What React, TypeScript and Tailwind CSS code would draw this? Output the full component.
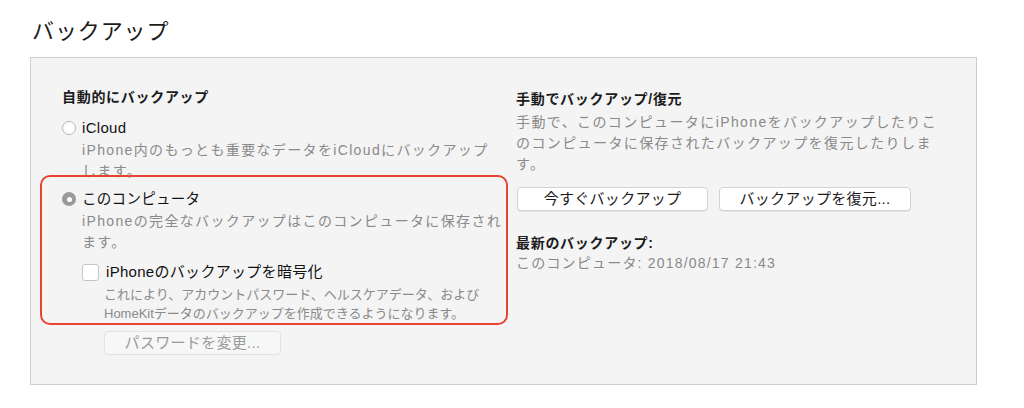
const FONT = 'font-["Liberation_Sans","Noto_Sans_CJK_JP",sans-serif]';

const Radio = ({ checked }: { checked?: boolean }) =>
  checked ? (
    <span className="flex h-[14px] w-[14px] shrink-0 items-center justify-center rounded-full bg-[#9a9a9a]">
      <span className="h-[5px] w-[5px] rounded-full bg-white" />
    </span>
  ) : (
    <span className="h-[14px] w-[14px] shrink-0 rounded-full border border-[#b9b9b9] bg-white" />
  );

const Button = ({ label, width, disabled }: { label: string; width: string; disabled?: boolean }) => (
  <button
    className={`${width} h-[24px] rounded-[4px] border text-[15px] leading-[22px] tracking-[0.3px] ${
      disabled
        ? 'border-[#e2e2e2] bg-[#f7f7f7] text-[#9b9b9b]'
        : 'border-[#d2d2d2] bg-white text-[#1a1a1a] shadow-[0_1px_0_rgba(0,0,0,0.06)]'
    }`}
  >
    {label}
  </button>
);

export default function App() {
  return (
    <div className={`${FONT} h-[408px] w-[1024px] bg-white pl-[30px] pt-[17px]`}>
      <h1 className="pl-[2px] text-[22px] leading-[30px] tracking-[0.04em] text-[#1c1c1c]">バックアップ</h1>

      <div className="mt-[10px] flex h-[328px] w-[947px] border border-[#cdcdcd] bg-[#f4f4f4] whitespace-nowrap">
        {/* left column */}
        <div className="relative w-[485px] shrink-0 pl-[31px] pt-[29px]">
          <div className="absolute left-[9px] top-[117px] h-[150px] w-[468px] rounded-[10px] border-2 border-[#e8442f]" />

          <h2 className="text-[14px] font-bold leading-[20px] tracking-[0.05em] text-[#1c1c1c]">自動的にバックアップ</h2>

          <div className="mt-[10px] flex items-center gap-[6px] text-[15px] leading-[22px] text-[#111]">
            <Radio />
            <span className="tracking-[0.3px]">iCloud</span>
          </div>
          <p className="mt-[1px] pl-[20px] text-[14px] leading-[21px] tracking-[1.35px] text-[#8a8a8a]">
            iPhone内のもっとも重要なデータをiCloudにバックアップ
            <br />
            します。
          </p>

          <div className="mt-[6px] flex items-center gap-[6px] text-[14.5px] leading-[22px] text-[#111]">
            <Radio checked />
            <span className="tracking-[0.3px]">このコンピュータ</span>
          </div>
          <p className="mt-[1px] pl-[20px] text-[14px] leading-[21px] tracking-[1.35px] text-[#8a8a8a]">
            iPhoneの完全なバックアップはこのコンピュータに保存され
            <br />
            ます。
          </p>

          <div className="mt-[8px] flex items-center gap-[7px] pl-[20px] text-[15px] leading-[22px] text-[#111]">
            <span className="h-[17px] w-[17px] rounded-[3px] border border-[#c4c4c4] bg-white" />
            <span className="tracking-[0.3px]">iPhoneのバックアップを暗号化</span>
          </div>
          <p className="mt-[2px] pl-[42px] text-[13px] leading-[19px] text-[#8a8a8a]">
            これにより、アカウントパスワード、ヘルスケアデータ、および
            <br />
            HomeKitデータのバックアップを作成できるようになります。
          </p>

          <div className="mt-[8px] pl-[42px]">
            <Button label="パスワードを変更..." width="w-[177px]" disabled />
          </div>
        </div>

        {/* right column */}
        <div className="pt-[31px]">
          <h2 className="text-[14px] font-bold leading-[20px] tracking-[0.05em] text-[#1c1c1c]">手動でバックアップ/復元</h2>
          <p className="mt-[3px] text-[14px] leading-[21px] tracking-[1.4px] text-[#8a8a8a]">
            手動で、このコンピュータにiPhoneをバックアップしたりこ
            <br />
            のコンピュータに保存されたバックアップを復元したりしま
            <br />
            す。
          </p>
          <div className="mt-[12px] flex gap-[11px] pl-[1px]">
            <Button label="今すぐバックアップ" width="w-[191px]" />
            <Button label="バックアップを復元..." width="w-[192px]" />
          </div>
          <h3 className="mt-[22px] text-[14px] font-bold leading-[20px] tracking-[0.05em] text-[#1c1c1c]">最新のバックアップ:</h3>
          <p className="text-[14px] leading-[21px] tracking-[1.2px] text-[#8a8a8a]">このコンピュータ: 2018/08/17 21:43</p>
        </div>
      </div>
    </div>
  );
}
